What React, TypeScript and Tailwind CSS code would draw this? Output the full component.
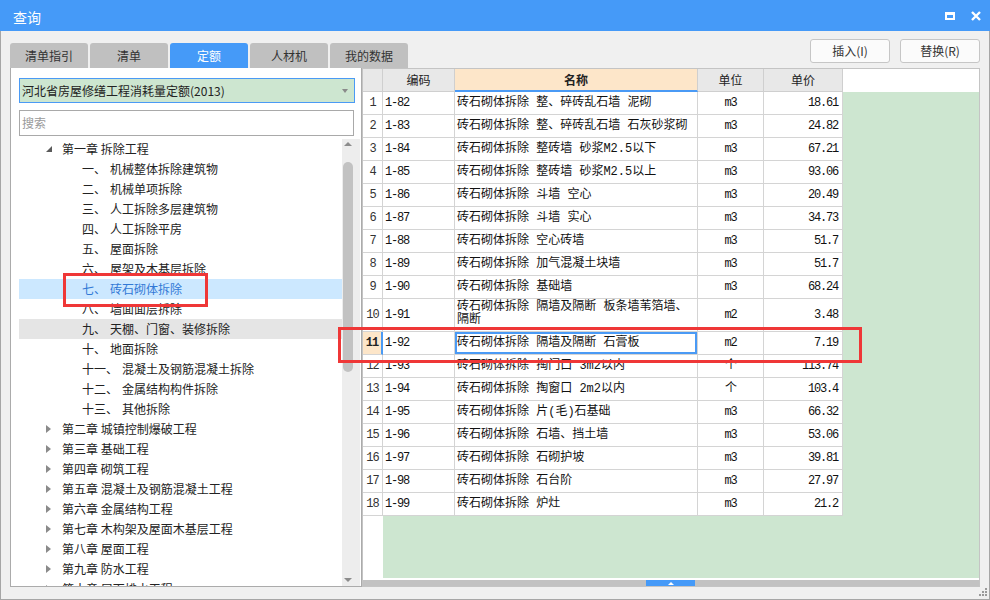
import React from "react";

type TreeNode =
  | { kind: "chapter"; text: string; open?: boolean }
  | { kind: "item"; num: string; text: string; selected?: boolean; hover?: boolean };

const tree: TreeNode[] = [
  { kind: "chapter", text: "第一章 拆除工程", open: true },
  { kind: "item", num: "一、", text: "机械整体拆除建筑物" },
  { kind: "item", num: "二、", text: "机械单项拆除" },
  { kind: "item", num: "三、", text: "人工拆除多层建筑物" },
  { kind: "item", num: "四、", text: "人工拆除平房" },
  { kind: "item", num: "五、", text: "屋面拆除" },
  { kind: "item", num: "六、", text: "屋架及木基层拆除" },
  { kind: "item", num: "七、", text: "砖石砌体拆除", selected: true },
  { kind: "item", num: "八、", text: "墙面面层拆除" },
  { kind: "item", num: "九、", text: "天棚、门窗、装修拆除", hover: true },
  { kind: "item", num: "十、", text: "地面拆除" },
  { kind: "item", num: "十一、", text: "混凝土及钢筋混凝土拆除" },
  { kind: "item", num: "十二、", text: "金属结构构件拆除" },
  { kind: "item", num: "十三、", text: "其他拆除" },
  { kind: "chapter", text: "第二章 城镇控制爆破工程" },
  { kind: "chapter", text: "第三章 基础工程" },
  { kind: "chapter", text: "第四章 砌筑工程" },
  { kind: "chapter", text: "第五章 混凝土及钢筋混凝土工程" },
  { kind: "chapter", text: "第六章 金属结构工程" },
  { kind: "chapter", text: "第七章 木构架及屋面木基层工程" },
  { kind: "chapter", text: "第八章 屋面工程" },
  { kind: "chapter", text: "第九章 防水工程" },
  { kind: "chapter", text: "第十章 屋面排水工程" },
];

const rows: [string, string, string, string, string][] = [
  ["1", "1-82", "砖石砌体拆除 整、碎砖乱石墙 泥砌", "m3", "18.61"],
  ["2", "1-83", "砖石砌体拆除 整、碎砖乱石墙 石灰砂浆砌", "m3", "24.82"],
  ["3", "1-84", "砖石砌体拆除 整砖墙 砂浆M2.5以下", "m3", "67.21"],
  ["4", "1-85", "砖石砌体拆除 整砖墙 砂浆M2.5以上", "m3", "93.06"],
  ["5", "1-86", "砖石砌体拆除 斗墙 空心", "m3", "20.49"],
  ["6", "1-87", "砖石砌体拆除 斗墙 实心", "m3", "34.73"],
  ["7", "1-88", "砖石砌体拆除 空心砖墙", "m3", "51.7"],
  ["8", "1-89", "砖石砌体拆除 加气混凝土块墙", "m3", "51.7"],
  ["9", "1-90", "砖石砌体拆除 基础墙", "m3", "68.24"],
  ["10", "1-91", "砖石砌体拆除 隔墙及隔断 板条墙苇箔墙、\n隔断", "m2", "3.48"],
  ["11", "1-92", "砖石砌体拆除 隔墙及隔断 石膏板", "m2", "7.19"],
  ["12", "1-93", "砖石砌体拆除 掏门口 3m2以内", "个", "113.74"],
  ["13", "1-94", "砖石砌体拆除 掏窗口 2m2以内", "个", "103.4"],
  ["14", "1-95", "砖石砌体拆除 片(毛)石基础", "m3", "66.32"],
  ["15", "1-96", "砖石砌体拆除 石墙、挡土墙", "m3", "53.06"],
  ["16", "1-97", "砖石砌体拆除 石砌护坡", "m3", "39.81"],
  ["17", "1-98", "砖石砌体拆除 石台阶", "m3", "27.97"],
  ["18", "1-99", "砖石砌体拆除 炉灶", "m3", "21.2"],
];

const tabs = ["清单指引", "清单", "定额", "人材机", "我的数据"];

function TreeRow({ node }: { node: TreeNode }) {
  if (node.kind === "chapter") {
    return (
      <div className="h-[20px] shrink-0 flex items-center text-[12px] text-[#222] whitespace-nowrap">
        <span className="w-[27px] shrink-0" />
        <span className="w-[16px] shrink-0 flex items-center">
          {node.open ? (
            <svg width="6" height="6" viewBox="0 0 6 6">
              <polygon points="6,0 6,6 0,6" fill="#5a5a5a" />
            </svg>
          ) : (
            <svg width="5" height="8" viewBox="0 0 5 8">
              <polygon points="0,0 5,4 0,8" fill="#8a8a8a" />
            </svg>
          )}
        </span>
        <span>{node.text}</span>
      </div>
    );
  }
  const bg = node.selected ? "bg-[#cce8ff] text-[#3279d6]" : node.hover ? "bg-[#e5e5e5] text-[#222]" : "text-[#222]";
  return (
    <div className={`h-[20px] shrink-0 flex items-center text-[12px] whitespace-nowrap pl-[63px] ${bg}`}>
      <span>{node.num}</span>
      <span className="ml-[4px]">{node.text}</span>
    </div>
  );
}

function DataRow({ r }: { r: [string, string, string, string, string] }) {
  const [n, code, name, unit, price] = r;
  const tall = n === "10";
  const active = n === "11";
  const h = tall ? "h-[33px]" : "h-[23px]";
  const cell = "h-full shrink-0 border-r border-b border-[#d4d4d4] bg-white flex items-center";
  const mono = "font-['Liberation_Mono','Noto_Sans_CJK_SC',monospace] text-[12px] tracking-[-1.2px] text-[#111]";
  return (
    <div className={`flex ${h} shrink-0`}>
      <div
        className={`h-full shrink-0 w-[20px] border-b border-[#d4d4d4] flex items-center justify-center text-[12px] font-['Liberation_Mono',monospace] tracking-[-1px] ${
          active ? "bg-[#fde6c9] font-bold text-[#222] border-r-2 border-r-[#4a9af5]" : "bg-white text-[#333] border-r"
        }`}
      >
        {n}
      </div>
      <div className={`${cell} w-[72px] pl-[2px] ${mono}`}>{code}</div>
      <div
        className={`${cell} w-[243px] pl-[2px] font-['Liberation_Mono','Noto_Sans_CJK_SC',monospace] text-[12px] text-[#111] overflow-hidden ${
          active ? "ring-2 ring-inset ring-[#4a9af5]" : ""
        } ${tall ? "items-start pt-[2px]" : ""}`}
      >
        <span className="whitespace-pre-line leading-[13px]">{name}</span>
      </div>
      <div className={`${cell} w-[66px] justify-center ${mono}`}>{unit}</div>
      <div className={`${cell} w-[79px] justify-end pr-[4px] ${mono}`}>{price}</div>
      <div className="flex-1 h-full bg-[#cde6d0]" />
    </div>
  );
}

export default function App() {
  return (
    <div className="w-[990px] h-[600px] flex flex-col bg-[#f0f0f0] font-['Noto_Sans_CJK_SC',sans-serif] relative overflow-hidden">
      {/* title bar */}
      <div className="h-[31px] shrink-0 bg-[#459af8] flex items-center pl-[13px] pr-[9px] text-white">
        <span className="text-[14px] pt-[3px]">查询</span>
        <div className="ml-auto flex items-center gap-[16px]">
          <div className="w-[10px] h-[8px] border-2 border-t-[3px] border-white" />
          <svg width="10" height="10" viewBox="0 0 10 10">
            <path d="M1 1 L9 9 M9 1 L1 9" stroke="white" strokeWidth="2.4" />
          </svg>
        </div>
      </div>

      <div className="flex-1 flex flex-col px-[9px] border-x border-b border-[#a6a6a6]">
        {/* toolbar */}
        <div className="h-[37px] shrink-0 flex">
          <div className="flex items-end gap-[2px]">
            {tabs.map((t) => (
              <div
                key={t}
                className={`w-[78px] h-[25px] rounded-t-[3px] flex items-center justify-center text-[12px] ${
                  t === "定额" ? "bg-[#459af8] text-white" : "bg-[#c0c0c0] text-[#333]"
                }`}
              >
                {t}
              </div>
            ))}
          </div>
          <div className="ml-auto mt-[8px] flex gap-[10px] self-start">
            <button className="w-[80px] h-[24px] rounded-[3px] border border-[#c6c6c6] bg-[#fbfbfb] text-[12px] text-[#333]">
              插入(I)
            </button>
            <button className="w-[80px] h-[24px] rounded-[3px] border border-[#c6c6c6] bg-[#fbfbfb] text-[12px] text-[#333]">
              替换(R)
            </button>
          </div>
        </div>

        {/* main */}
        <div className="h-[519px] shrink-0 flex">
          {/* left panel */}
          <div className="w-[352px] shrink-0 bg-white border-x border-b border-[#ababab] flex flex-col pl-[8px] pt-[10px]">
            <div className="w-[336px] h-[25px] shrink-0 bg-[#cde6d0] border border-[#4a9af5] flex items-center pl-[2px] pr-[6px] text-[12px] text-[#222]">
              <span>河北省房屋修缮工程消耗量定额(2013)</span>
              <svg className="ml-auto" width="6" height="4" viewBox="0 0 6 4">
                <polygon points="0,0 6,0 3,4" fill="#8a8a8a" />
              </svg>
            </div>
            <div className="w-[335px] h-[26px] shrink-0 mt-[7px] bg-white border border-[#a9a9a9] flex items-center pl-[2px] text-[12px] text-[#9a9a9a]">
              搜索
            </div>
            <div className="flex-1 min-h-0 mt-[3px] flex">
              <div className="w-[323px] shrink-0 flex flex-col overflow-hidden">
                {tree.map((n, i) => (
                  <TreeRow key={i} node={n} />
                ))}
              </div>
              <div className="w-[18px] shrink-0 bg-[#ededed] flex flex-col">
                <div className="w-[12px] flex flex-col items-center h-full">
                  <div className="h-[10px] shrink-0 flex items-center">
                    <svg width="8" height="4" viewBox="0 0 8 4">
                      <polygon points="0,4 8,4 4,0" fill="#8c8c8c" />
                    </svg>
                  </div>
                  <div className="mt-[13px] w-[10px] h-[210px] shrink-0 rounded-full bg-[#c2c2c2]" />
                  <div className="flex-1" />
                  <div className="h-[10px] shrink-0 flex items-center mb-[1px]">
                    <svg width="8" height="4" viewBox="0 0 8 4">
                      <polygon points="0,0 8,0 4,4" fill="#8c8c8c" />
                    </svg>
                  </div>
                </div>
              </div>
            </div>
          </div>

          {/* right table */}
          <div className="w-[618px] shrink-0 border border-[#c4c4c4] flex flex-col bg-white">
            <div className="h-[23px] shrink-0 flex text-[12px] text-[#222]">
              <div className="w-[20px] h-full shrink-0 bg-[#e8e8e8] border-r border-b border-[#cfcfcf]" />
              <div className="w-[72px] h-full shrink-0 bg-[#e8e8e8] border-r border-b border-[#cfcfcf] flex items-center justify-center">
                编码
              </div>
              <div className="w-[243px] h-full shrink-0 bg-[#fde6c9] border-r border-[#cfcfcf] border-b-2 border-b-[#4a9af5] flex items-center justify-center font-bold">
                名称
              </div>
              <div className="w-[66px] h-full shrink-0 bg-[#e8e8e8] border-r border-b border-[#cfcfcf] flex items-center justify-center">
                单位
              </div>
              <div className="w-[79px] h-full shrink-0 bg-[#e8e8e8] border-r border-b border-[#cfcfcf] flex items-center justify-center">
                单价
              </div>
              <div className="flex-1 bg-white" />
            </div>
            {rows.map((r) => (
              <DataRow key={r[0]} r={r} />
            ))}
            <div className="flex-1 flex">
              <div className="w-[20px] shrink-0 bg-white" />
              <div className="flex-1 bg-[#cde6d0]" />
            </div>
            <div className="h-[2px] shrink-0 bg-white" />
            <div className="h-[6px] shrink-0 bg-[#c2c2c2] flex">
              <div className="w-[283px] shrink-0" />
              <div className="w-[49px] shrink-0 bg-[#459af8] flex items-center justify-center">
                <svg width="6" height="3" viewBox="0 0 6 3">
                  <polygon points="0,3 6,3 3,0" fill="white" />
                </svg>
              </div>
            </div>
          </div>
        </div>
      </div>

      {/* annotation rectangles */}
      <div className="absolute left-[63px] top-[273px] w-[145px] h-[34px] border-[3px] border-[#ef3737] pointer-events-none" />
      <div className="absolute left-[338px] top-[327px] w-[524px] h-[36px] border-[3px] border-[#ef3737] pointer-events-none" />

      {/* resize grip */}
      <svg className="absolute right-[3px] bottom-[4px]" width="9" height="9" viewBox="0 0 9 9">
        <rect x="7" y="1" width="2" height="2" fill="#9a9a9a" />
        <rect x="4" y="4" width="2" height="2" fill="#9a9a9a" />
        <rect x="7" y="4" width="2" height="2" fill="#9a9a9a" />
        <rect x="1" y="7" width="2" height="2" fill="#9a9a9a" />
        <rect x="4" y="7" width="2" height="2" fill="#9a9a9a" />
        <rect x="7" y="7" width="2" height="2" fill="#9a9a9a" />
      </svg>
    </div>
  );
}
